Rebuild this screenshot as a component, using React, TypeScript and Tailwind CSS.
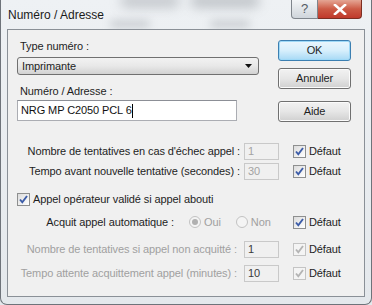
import React from "react";

const font = { fontFamily: '"Liberation Sans", Arial, sans-serif' };

const CheckBox = ({ disabled = false }: { disabled?: boolean }) => (
  <div
    className={`w-[13px] h-[13px] border flex items-center justify-center shrink-0 ${
      disabled
        ? "border-[#c4c4c4] bg-[#f4f4f4]"
        : "border-[#8e8f8f] bg-gradient-to-br from-[#dcdcdc] to-[#ffffff]"
    }`}
  >
    <svg width="11" height="11" viewBox="0 0 11 11">
      <path
        d="M2 5.5 L4.3 8.3 L9 2"
        fill="none"
        stroke={disabled ? "#b4b4b4" : "#3c5ca8"}
        strokeWidth="1.9"
      />
    </svg>
  </div>
);

const Radio = ({ checked = false }: { checked?: boolean }) => (
  <div className="w-[12px] h-[12px] rounded-full border border-[#c2c2c2] bg-[#f4f4f4] flex items-center justify-center shrink-0">
    {checked && <div className="w-[6px] h-[6px] rounded-full bg-[#b0b0b0]" />}
  </div>
);

const Button = ({ label, primary = false }: { label: string; primary?: boolean }) => (
  <div
    className={`w-[73px] h-[21px] rounded-[3px] border flex items-center justify-center text-[11px] text-[#1e1e1e] ${
      primary
        ? "border-[#3c7fb1] bg-gradient-to-b from-[#eaf6fd] via-[#d7effc] to-[#a7d9f5] shadow-[inset_0_0_0_1px_#9fd9f7]"
        : "border-[#707070] bg-gradient-to-b from-[#f2f2f2] via-[#e6e6e6] to-[#d0d0d0] shadow-[inset_0_0_0_1px_#fbfbfb]"
    }`}
  >
    {label}
  </div>
);

const SmallInput = ({ value, dim = false }: { value: string; dim?: boolean }) => (
  <div
    className={`w-[35px] h-[17px] border border-[#c9c9c9] bg-[#f0f0f0] pl-[3px] text-[11px] leading-[15px] ${
      dim ? "text-[#a3a3a3]" : "text-[#3a3a3a]"
    }`}
  >
    {value}
  </div>
);

const Defaut = ({ disabled = false }: { disabled?: boolean }) => (
  <div className="ml-[14px] flex items-center gap-[3px]">
    <CheckBox disabled={disabled} />
    <span className="text-[#1e1e1e]">Défaut</span>
  </div>
);

const NumRow = ({
  label,
  value,
  gray = false,
  valueDim = false,
  pad,
}: {
  label: string;
  value: string;
  gray?: boolean;
  valueDim?: boolean;
  pad: string;
}) => (
  <div className="flex items-center h-[20px]">
    <div className={`w-[236px] text-right ${pad} ${gray ? "text-[#a0a0a0]" : "text-[#1e1e1e]"}`}>
      {label}
    </div>
    <SmallInput value={value} dim={valueDim} />
    <Defaut disabled={gray} />
  </div>
);

export default function App() {
  return (
    <div
      className="relative w-[372px] h-[305px] overflow-hidden bg-gradient-to-b from-[#eef1f4] to-[#e4e8ec]"
      style={font}
    >
      {/* glass blur */}
      <div className="absolute left-[120px] top-[-6px] w-[60px] h-[14px] rounded-full bg-[#8a8f96] opacity-40 blur-[6px]" />
      <div className="absolute left-[190px] top-[-6px] w-[70px] h-[14px] rounded-full bg-[#7d838a] opacity-40 blur-[6px]" />
      <div className="absolute left-[110px] top-[20px] w-[40px] h-[8px] rounded-full bg-[#8a8f96] opacity-35 blur-[4px]" />
      <div className="absolute left-[210px] top-[20px] w-[40px] h-[8px] rounded-full bg-[#8a8f96] opacity-35 blur-[4px]" />

      <div className="relative flex flex-col h-full border-x border-b border-[#6e737a] rounded-b-[7px]">
        {/* title bar */}
        <div className="flex h-[29px]">
          <div className="pl-[7px] pt-[6px] text-[12px] text-[#1a1a1a]">Numéro / Adresse</div>
          <div className="ml-auto mr-[9px] flex">
            <div className="w-[27px] h-[19px] rounded-bl-[4px] border border-t-0 border-[#7f858c] bg-gradient-to-b from-[#f3f5f7] to-[#cfd5db] flex items-center justify-center text-[13px] text-[#555c64]">
              ?
            </div>
            <div className="w-[44px] h-[19px] rounded-br-[4px] border border-t-0 border-l-0 border-[#7c2e22] bg-gradient-to-b from-[#e4a594] via-[#cc5a45] to-[#c0392b] flex items-center justify-center">
              <svg width="14" height="11" viewBox="0 0 14 11">
                <path d="M2 1 L12 10 M12 1 L2 10" stroke="#ffffff" strokeWidth="2.6" strokeLinecap="square" />
              </svg>
            </div>
          </div>
        </div>

        {/* client area */}
        <div className="ml-[6px] w-[358px] h-[268px] border border-[#8a9097] bg-[#f0f0f0] text-[11px] tracking-[-0.1px] text-[#1e1e1e]">
          <div className="flex pl-[9px] pt-[9px]">
            <div className="w-[242px] flex flex-col">
              <div className="h-[14px] leading-[14px] pl-[3px]">Type numéro :</div>
              <div className="mt-[4px] h-[18px] rounded-[3px] border border-[#707070] bg-gradient-to-b from-[#f2f2f2] via-[#e8e8e8] to-[#d2d2d2] flex items-center pl-[4px]">
                <span>Imprimante</span>
                <svg className="ml-auto mr-[6px]" width="7" height="4" viewBox="0 0 7 4">
                  <path d="M0 0 H7 L3.5 4 Z" fill="#111" />
                </svg>
              </div>
              <div className="mt-[9px] h-[14px] leading-[14px] pl-[3px]">Numéro / Adresse :</div>
              <div className="mt-[2px] w-[220px] h-[21px] border border-[#abadb3] border-t-[#8c8f96] bg-white flex items-center pl-[3px]">
                <span className="text-[#111]">NRG MP C2050 PCL 6</span>
                <span className="w-px h-[14px] bg-black" />
              </div>
            </div>
            <div className="ml-[19px] flex flex-col">
              <div className="mt-[1px]">
                <Button label="OK" primary />
              </div>
              <div className="mt-[7px]">
                <Button label="Annuler" />
              </div>
              <div className="mt-[12px]">
                <Button label="Aide" />
              </div>
            </div>
          </div>

          <div className="mt-[19px] flex flex-col">
            <NumRow label="Nombre de tentatives en cas d'échec appel :" value="1" valueDim pad="pr-[4px]" />
            <NumRow label="Tempo avant nouvelle tentative (secondes) :" value="30" valueDim pad="pr-[4px]" />

            <div className="mt-[8px] h-[20px] flex items-center pl-[9px] gap-[3px]">
              <CheckBox />
              <span>Appel opérateur validé si appel abouti</span>
            </div>

            <div className="mt-[3px] h-[20px] flex items-center">
              <div className="w-[166px] text-right">Acquit appel automatique :</div>
              <div className="w-[119px] pl-[15px] flex items-center text-[#a0a0a0]">
                <Radio checked />
                <span className="ml-[3px]">Oui</span>
                <div className="ml-[15px]">
                  <Radio />
                </div>
                <span className="ml-[3px]">Non</span>
              </div>
              <div className="flex items-center gap-[3px]">
                <CheckBox />
                <span>Défaut</span>
              </div>
            </div>

            <div className="mt-[7px]">
              <NumRow label="Nombre de tentatives si appel non acquitté :" value="1" gray pad="pr-[7px]" />
            </div>
            <div className="mt-[4px]">
              <NumRow label="Tempo attente acquittement appel (minutes) :" value="10" gray pad="pr-[7px]" />
            </div>
          </div>
        </div>
      </div>
    </div>
  );
}
